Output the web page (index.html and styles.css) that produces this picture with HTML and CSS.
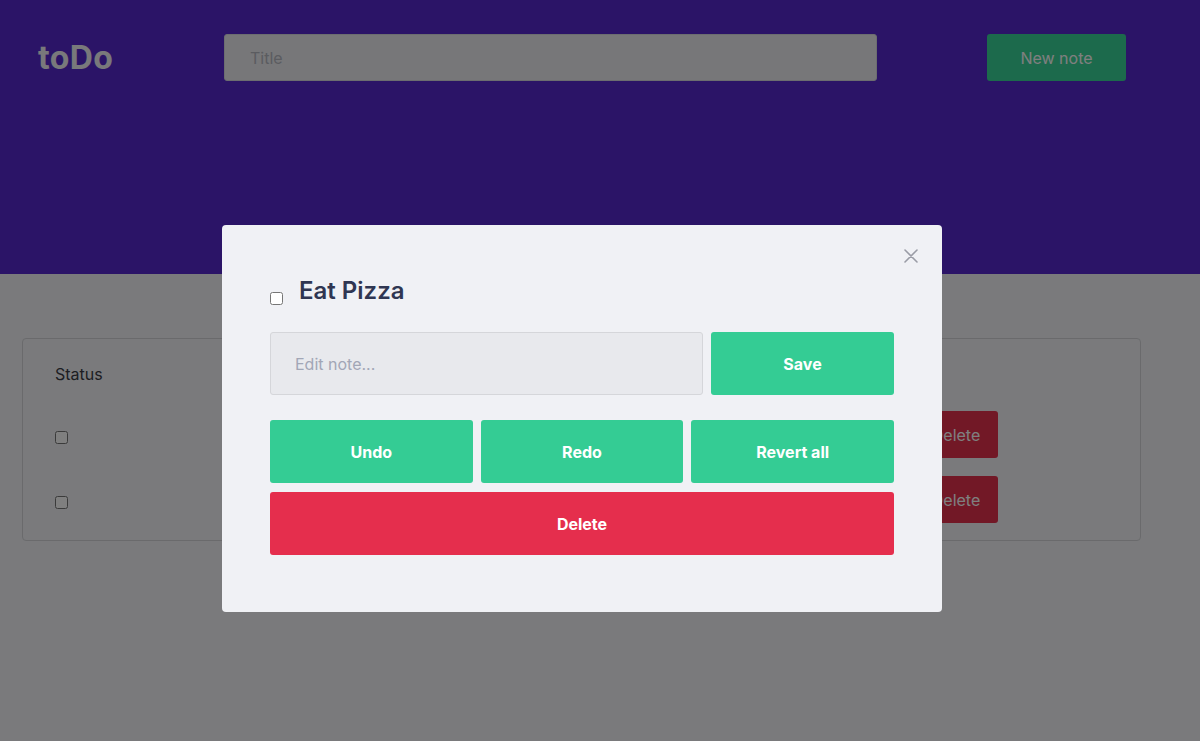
FILE: index.html
```html
<!DOCTYPE html>
<html lang="en">
<head>
<meta charset="utf-8">
<title>toDo</title>
<link rel="stylesheet" href="styles.css">
</head>
<body>
  <header class="header">
    <div class="logo">toDo</div>
    <input class="title-input" type="text" placeholder="Title">
    <button class="btn-new">New note</button>
  </header>

  <main class="main">
    <div class="card">
      <table class="notes">
        <thead>
          <tr>
            <th class="col-status">Status</th>
            <th class="col-title"></th>
            <th class="col-action"></th>
            <th class="col-spacer"></th>
          </tr>
        </thead>
        <tbody>
          <tr>
            <td class="col-status"><input type="checkbox" class="check"></td>
            <td class="col-title"></td>
            <td class="col-action"><button class="btn-row-delete">Delete</button></td>
            <td class="col-spacer"></td>
          </tr>
          <tr>
            <td class="col-status"><input type="checkbox" class="check"></td>
            <td class="col-title"></td>
            <td class="col-action"><button class="btn-row-delete">Delete</button></td>
            <td class="col-spacer"></td>
          </tr>
        </tbody>
      </table>
    </div>
  </main>

  <div class="overlay"></div>

  <div class="modal">
    <button class="close" aria-label="Close">
      <svg width="14" height="14" viewBox="0 0 14 14"><path d="M1 1L13 13M13 1L1 13" stroke="#9a9ca6" stroke-width="1.6" stroke-linecap="round"/></svg>
    </button>
    <div class="modal-title-row">
      <input type="checkbox" class="modal-check">
      <h2 class="modal-title">Eat Pizza</h2>
    </div>
    <div class="edit-row">
      <input class="edit-input" type="text" placeholder="Edit note...">
      <button class="btn btn-green btn-save">Save</button>
    </div>
    <div class="action-row">
      <button class="btn btn-green">Undo</button>
      <button class="btn btn-green">Redo</button>
      <button class="btn btn-green">Revert all</button>
    </div>
    <button class="btn btn-red btn-delete">Delete</button>
  </div>
</body>
</html>
```

FILE: styles.css
```css
* { box-sizing: border-box; }

html, body {
  margin: 0;
  padding: 0;
  height: 100%;
}

body {
  font-family: Inter, "Open Sans", "Liberation Sans", sans-serif;
  font-size: 16px;
  background: #f4f5f8;
  color: #2f3652;
  overflow: hidden;
  position: relative;
}

button { font-family: inherit; }

.header {
  background: #5628cf;
  height: 274px;
  display: flex;
  align-items: flex-start;
  padding: 34px 0 0 38px;
}

.logo {
  width: 186px;
  height: 47px;
  line-height: 47px;
  font-size: 32px;
  font-weight: 700;
  color: #f2f2f7;
  letter-spacing: 0.4px;
}

.title-input {
  width: 653px;
  height: 47px;
  border: 1px solid #d8dae0;
  border-radius: 3px;
  background: #eeeff3;
  padding: 0 25px;
  font-family: inherit;
  font-size: 16px;
  outline: none;
}
.title-input::placeholder { color: #b6b8c1; }

.btn-new {
  margin-left: 110px;
  width: 139px;
  height: 47px;
  border: none;
  border-radius: 3px;
  background: #38d498;
  color: #ffffff;
  font-size: 16px;
}

.main {
  padding: 64px 59px 0 22px;
}

.card {
  border: 1px solid #d4d5d9;
  border-radius: 4px;
  padding: 0 0 8px 32px;
}

.notes {
  width: 100%;
  border-collapse: collapse;
}

.notes th {
  text-align: left;
  font-weight: 400;
  color: #3c3d46;
  padding: 23px 0 16px;
  height: 63px;
  line-height: 24px;
}

.notes td {
  height: 65px;
  padding: 0;
  vertical-align: middle;
}

.col-status { width: 300px; }
.col-action { width: 84px; }
.col-spacer { width: 142px; }

.check {
  margin: 9px 0 0 0;
  width: 13px;
  height: 13px;
}

.btn-row-delete {
  width: 84px;
  height: 47px;
  border: none;
  border-radius: 3px;
  background: #e4304c;
  color: #ffffff;
  font-size: 16px;
}

.overlay {
  position: absolute;
  inset: 0;
  background: rgba(0, 0, 0, 0.5);
}

.modal {
  position: absolute;
  left: 222px;
  top: 225px;
  width: 720px;
  background: #f0f1f5;
  border-radius: 4px;
  padding: 48px 48px 57px;
  display: flex;
  flex-direction: column;
}

.close {
  position: absolute;
  top: 24px;
  right: 24px;
  width: 14px;
  height: 14px;
  padding: 0;
  border: none;
  background: transparent;
  display: flex;
}

.modal-title-row {
  display: flex;
  align-items: flex-end;
  height: 36px;
}

.modal-check {
  margin: 0 16px 4px 0;
  width: 13px;
  height: 13px;
}

.modal-title {
  margin: 0;
  font-size: 24px;
  line-height: 36px;
  font-weight: 600;
  color: #2f3652;
}

.edit-row {
  display: flex;
  gap: 8px;
  margin-top: 23px;
}

.edit-input {
  flex: 1;
  height: 63px;
  border: 1px solid #d5d6da;
  border-radius: 3px;
  background: #e8e9ed;
  padding: 0 24px;
  font-family: inherit;
  font-size: 16px;
  outline: none;
}
.edit-input::placeholder { color: #a2a6b6; }

.btn {
  height: 63px;
  border: none;
  border-radius: 3px;
  color: #ffffff;
  font-size: 16px;
  font-weight: 700;
}

.btn-green { background: #34cc94; }
.btn-red { background: #e52e4d; }

.btn-save { width: 183px; }

.action-row {
  display: grid;
  grid-template-columns: repeat(3, 1fr);
  gap: 8px;
  margin-top: 25px;
}

.btn-delete {
  margin-top: 9px;
  width: 100%;
}
```
